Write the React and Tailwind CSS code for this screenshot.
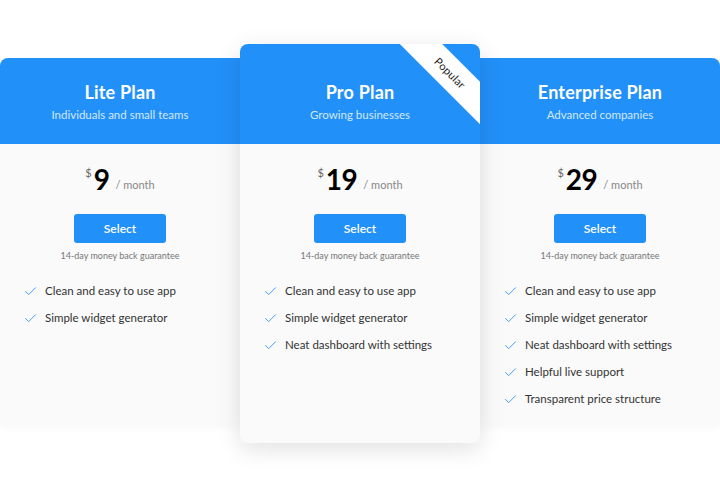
import React from 'react';
import { Check } from 'lucide-react';

const plans = [
  {
    name: 'Lite Plan',
    tagline: 'Individuals and small teams',
    price: 9,
    features: ['Clean and easy to use app', 'Simple widget generator'],
    side: 'left',
  },
  {
    name: 'Pro Plan',
    tagline: 'Growing businesses',
    price: 19,
    features: ['Clean and easy to use app', 'Simple widget generator', 'Neat dashboard with settings'],
    popular: true,
  },
  {
    name: 'Enterprise Plan',
    tagline: 'Advanced companies',
    price: 29,
    features: [
      'Clean and easy to use app',
      'Simple widget generator',
      'Neat dashboard with settings',
      'Helpful live support',
      'Transparent price structure',
    ],
    side: 'right',
  },
];

const PlanCard = ({ plan }) => {
  const { name, tagline, price, features, popular, side } = plan;

  const shell = popular
    ? 'relative z-10 mt-0 h-[399px] rounded-lg shadow-[0_6px_24px_rgba(0,0,0,0.12)]'
    : side === 'left'
    ? 'mt-[14px] h-[367px] rounded-tl-lg shadow-[0_2px_10px_rgba(0,0,0,0.03)]'
    : 'mt-[14px] h-[367px] rounded-tr-lg shadow-[0_2px_10px_rgba(0,0,0,0.03)]';

  return (
    <div className={`w-[240px] flex flex-col bg-[#fafafa] overflow-hidden ${shell}`}>
      {/* Header */}
      <div
        className={`relative overflow-hidden bg-[#2290f9] flex flex-col items-center text-white ${
          popular ? 'h-[100px] pt-[37px]' : 'h-[86px] pt-[23px]'
        }`}
      >
        <h2 className="text-[18px] leading-[23px] font-bold tracking-[0.2px]">{name}</h2>
        <p className="mt-[4px] text-[11.5px] leading-[14px] text-[#d3e8ff]">{tagline}</p>

        {popular && (
          <div className="absolute left-[145px] top-[14px] w-[130px] h-[30px] rotate-45 bg-white flex items-center justify-center">
            <span className="text-[11px] text-[#222] tracking-[0.2px]">Popular</span>
          </div>
        )}
      </div>

      {/* Price */}
      <div className="flex flex-col items-center pt-[19px]">
        <div className="flex items-start">
          <span className="text-[11px] leading-[12px] text-[#666] mt-[4px] mr-[2px]">$</span>
          <span className="text-[28px] leading-[32px] font-bold text-black tracking-[-0.5px]">{price}</span>
          <span className="text-[11px] leading-[14px] text-[#888] mt-[15px] ml-[6px]">/ month</span>
        </div>

        <button className="mt-[19px] w-[92px] h-[29px] rounded-[3px] bg-[#2290f9] text-white text-[12px] font-semibold">
          Select
        </button>
        <p className="mt-[7px] text-[9px] leading-[12px] text-[#777]">14-day money back guarantee</p>
      </div>

      {/* Features */}
      <ul className="mt-[22px] pl-[23px] flex flex-col gap-[13px]">
        {features.map((f) => (
          <li key={f} className="flex items-center h-[14px]">
            <Check size={15} strokeWidth={1.5} className="text-[#3a98f5]" />
            <span className="ml-[7px] text-[11.5px] leading-[14px] text-[#333]">{f}</span>
          </li>
        ))}
      </ul>
    </div>
  );
};

const App = () => {
  return (
    <div
      className="w-[720px] h-[500px] bg-white flex items-start pt-[44px]"
      style={{ fontFamily: 'Lato, "Open Sans", sans-serif' }}
    >
      {plans.map((p) => (
        <PlanCard key={p.name} plan={p} />
      ))}
    </div>
  );
};

export default App;
